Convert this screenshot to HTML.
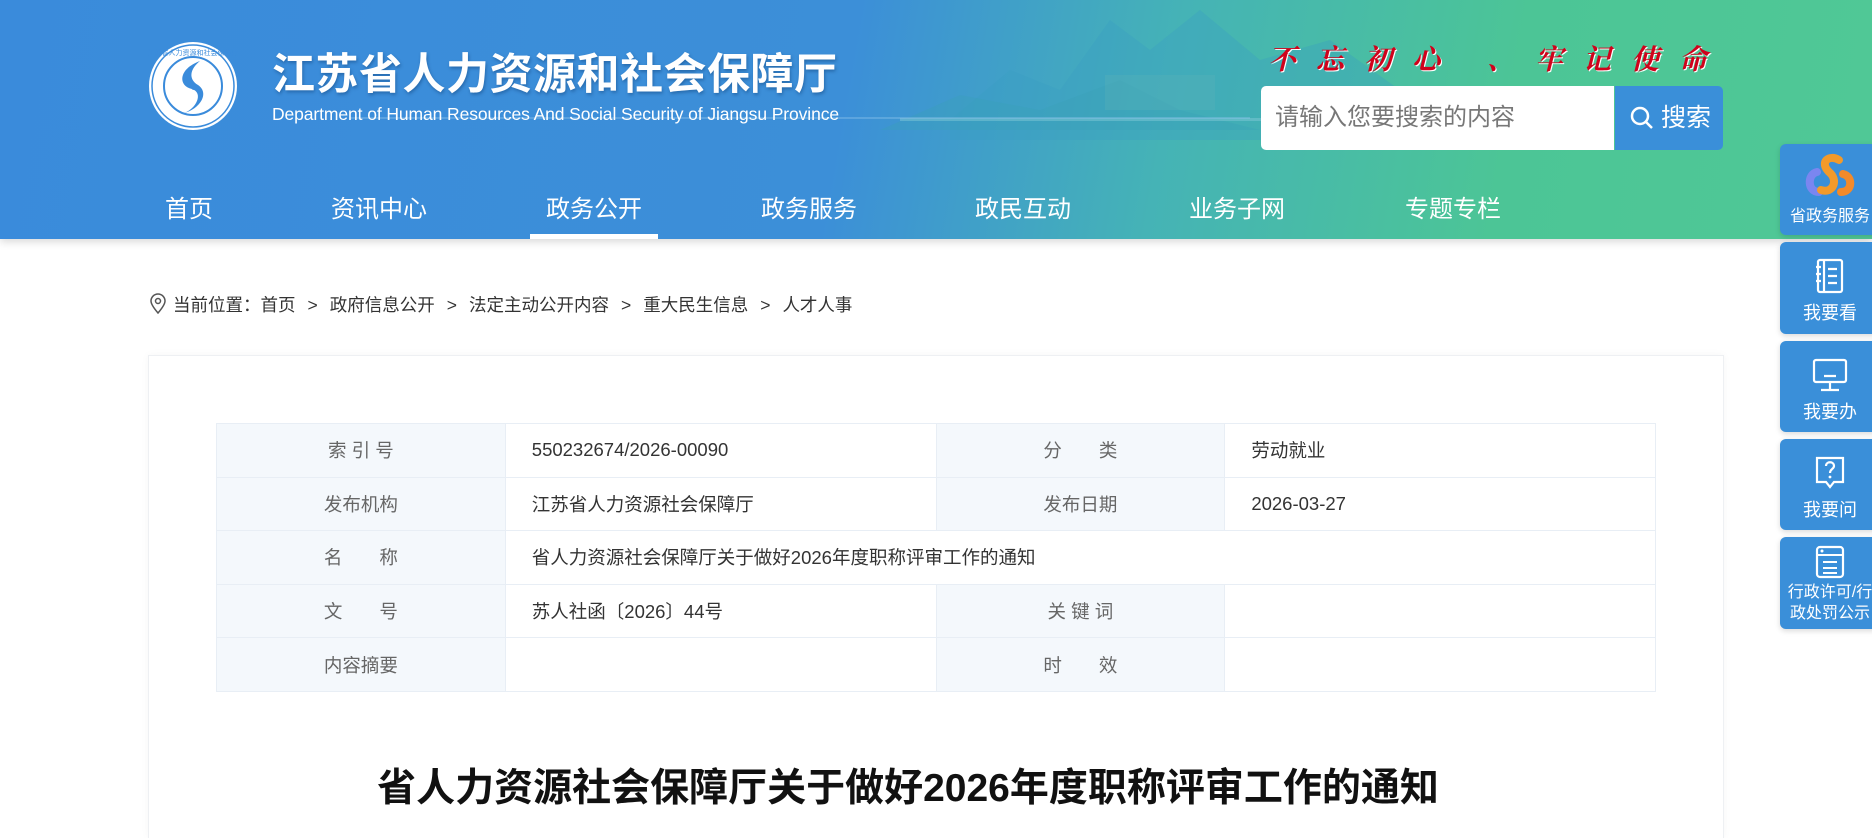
<!DOCTYPE html>
<html><head><meta charset="utf-8">
<style>
*{margin:0;padding:0;box-sizing:border-box}
html{width:1872px;height:838px;overflow:hidden}
body{width:1872px;height:838px;overflow:hidden;background:#fff;font-family:"Liberation Sans","Noto Sans CJK SC",sans-serif;position:relative}
.hd{position:absolute;left:0;top:0;width:1872px;height:239px;background:linear-gradient(100deg,#3a8bdb 0%,#3c8fd8 45%,#45b3b6 62%,#4cc596 80%,#50c896 100%);box-shadow:0 3px 8px rgba(0,0,0,.15);overflow:hidden}
.title{position:absolute;left:272px;top:40px;color:#fff;font-size:43px;font-weight:bold;letter-spacing:0.5px;text-shadow:1px 2px 3px rgba(0,40,90,.35);white-space:nowrap}
.en{position:absolute;left:272px;top:104px;color:#fff;font-size:17.5px;white-space:nowrap;letter-spacing:-0.1px}
.slogan{position:absolute;left:1268px;top:38px;color:#d0021b;font-size:28px;font-weight:bold;font-style:italic;font-family:"Liberation Serif","Noto Serif CJK SC",serif;white-space:nowrap;letter-spacing:20px;text-shadow:1px 1px 0 #fff}
.search{position:absolute;left:1261px;top:86px;width:353px;height:64px;background:#fff;border-radius:5px 0 0 5px;color:#777;font-size:24px;line-height:64px;padding-left:14px}
.sbtn{position:absolute;left:1615px;top:86px;width:108px;height:64px;background:#3a8fd9;border-radius:0 5px 5px 0;color:#fff;font-size:25px;line-height:64px;padding-left:46px}
.nav{position:absolute;top:189px;color:#fff;font-size:24px;white-space:nowrap}
.act{position:absolute;left:530px;top:234px;width:128px;height:5px;background:#fff}
.side{position:absolute;left:1780px;width:100px;background:#3a8fd9;border-radius:6px;color:#fff;text-align:center;font-size:18px;box-shadow:0 2px 6px rgba(0,0,0,.15)}
.side svg{display:block;margin:0 auto}
.crumb{position:absolute;left:148px;top:292px;font-size:17.5px;color:#333;white-space:nowrap}
.crumb b{font-weight:normal;margin:0 12px}
.box{position:absolute;left:148px;top:355px;width:1576px;height:483px;border:1px solid #eef0f3;border-bottom:none;box-shadow:0 0 8px rgba(0,0,0,.04)}
table{position:absolute;left:216px;top:423px;width:1440px;border-collapse:collapse;font-size:18.5px}
td{height:53.6px;border:1px solid #e8eef5;color:#333;padding-left:26px}
td.l{background:#f4f8fc;color:#666;text-align:center;padding:0;width:289px}
td.v{width:431px}
h1{position:absolute;left:0;width:1816px;top:757px;text-align:center;font-size:39px;font-weight:bold;color:#111;white-space:nowrap}
</style></head><body>
<div class="hd">
<svg width="1872" height="239" style="position:absolute;left:0;top:0">
<path d="M950 120 L1010 70 L1060 90 L1110 20 L1150 50 L1200 10 L1260 60 L1330 40 L1400 90 L1400 140 L950 140Z" fill="#3a9ec4" opacity=".35"/>
<path d="M880 130 L960 95 L1040 110 L1120 80 L1180 110 L1260 130 Z" fill="#3aa0b8" opacity=".35"/>
<rect x="1105" y="75" width="110" height="35" fill="#5ab3b8" opacity=".35"/>
<rect x="900" y="118" width="500" height="3" fill="#7fc7d5" opacity=".5"/>
<rect x="350" y="117" width="900" height="2" fill="#8cc3ea" opacity=".4"/>
</svg>
<svg width="90" height="90" style="position:absolute;left:148px;top:41px" viewBox="0 0 90 90">
<circle cx="45" cy="45" r="44" fill="#fff"/>
<circle cx="45" cy="45" r="41" fill="none" stroke="#3a8bdb" stroke-width="1.5"/>
<circle cx="45" cy="45" r="29" fill="#fff" stroke="#3a8bdb" stroke-width="2"/>
<path d="M52 20 C30 28 30 45 44 48 C56 52 48 68 36 72 C52 68 62 52 50 44 C40 38 42 28 52 20Z" fill="#3a8bdb"/>
<circle cx="46" cy="46" r="3" fill="#3a8bdb"/>
<text x="45" y="14" font-size="7" fill="#3a8bdb" text-anchor="middle">江苏省人力资源和社会保障厅</text>
</svg>
<div class="title">江苏省人力资源和社会保障厅</div>
<div class="en">Department of Human Resources And Social Security of Jiangsu Province</div>
<div class="slogan">不忘初心 、牢记使命</div>
<div class="search">请输入您要搜索的内容</div>
<div class="sbtn"><svg width="26" height="26" viewBox="0 0 26 26" style="position:absolute;left:14px;top:19px"><circle cx="11" cy="11" r="8" fill="none" stroke="#fff" stroke-width="2.5"/><path d="M17 17 L23 23" stroke="#fff" stroke-width="2.5"/></svg>搜索</div>
<div class="nav" style="left:165px">首页</div>
<div class="nav" style="left:331px">资讯中心</div>
<div class="nav" style="left:546px">政务公开</div>
<div class="nav" style="left:761px">政务服务</div>
<div class="nav" style="left:975px">政民互动</div>
<div class="nav" style="left:1189px">业务子网</div>
<div class="nav" style="left:1405px">专题专栏</div>
<div class="act"></div>
</div>
<div class="side" style="top:144px;height:91px;padding-top:6px;font-size:16px"><svg width="62" height="52" viewBox="0 0 62 52"><path d="M18 22 C8 24 8 42 20 42" stroke="#7a86f0" stroke-width="8" fill="none" stroke-linecap="round"/><path d="M40 10 C30 4 20 12 30 22 C40 30 34 44 22 40" stroke="#f39a2a" stroke-width="8" fill="none" stroke-linecap="round"/><path d="M44 24 C54 26 54 42 42 42" stroke="#f38a2a" stroke-width="8" fill="none" stroke-linecap="round"/></svg>省政务服务</div>
<div class="side" style="top:242px;height:92px;padding-top:16px"><svg width="32" height="36" viewBox="0 0 32 36"><rect x="4" y="2" width="24" height="32" rx="2" fill="none" stroke="#fff" stroke-width="2.2"/><path d="M10 2 V34 M14 11 H23 M14 18 H23 M14 25 H23 M2 9 H7 M2 16 H7 M2 23 H7" stroke="#fff" stroke-width="2.2"/></svg><div style="margin-top:5px">我要看</div></div>
<div class="side" style="top:341px;height:91px;padding-top:16px"><svg width="36" height="36" viewBox="0 0 36 36"><rect x="2" y="3" width="32" height="22" rx="2" fill="none" stroke="#fff" stroke-width="2.2"/><path d="M12 19 H24 M18 25 V32 M9 33 H27" stroke="#fff" stroke-width="2.2"/></svg><div style="margin-top:5px">我要办</div></div>
<div class="side" style="top:439px;height:91px;padding-top:16px"><svg width="32" height="36" viewBox="0 0 32 36"><path d="M3 3 H29 V27 H20 L16 32 L12 27 H3Z" fill="none" stroke="#fff" stroke-width="2.2"/><path d="M12 11 C12 6 20 6 20 11 C20 14 16 14 16 18" fill="none" stroke="#fff" stroke-width="2.2"/><circle cx="16" cy="22" r="1.4" fill="#fff"/></svg><div style="margin-top:5px">我要问</div></div>
<div class="side" style="top:537px;height:92px;padding-top:8px;line-height:21px;font-size:16px"><svg width="30" height="34" viewBox="0 0 30 34"><rect x="2" y="2" width="26" height="30" rx="3" fill="none" stroke="#fff" stroke-width="2.2"/><path d="M2 10 H28 M8 17 H22 M8 23 H22 M8 28 H22" stroke="#fff" stroke-width="2"/><circle cx="7" cy="6" r="1.5" fill="#fff"/></svg><div style="margin-top:3px">行政许可/行<br>政处罚公示</div></div>
<div class="crumb"><svg width="20" height="22" viewBox="0 0 20 22" style="vertical-align:-4px;margin-right:5px"><path d="M10 20 C4 13 3 10 3 8 A7 7 0 0 1 17 8 C17 10 16 13 10 20Z" fill="none" stroke="#555" stroke-width="1.5"/><circle cx="10" cy="8" r="2.5" fill="none" stroke="#555" stroke-width="1.5"/></svg>当前位置：首页<b>&gt;</b>政府信息公开<b>&gt;</b>法定主动公开内容<b>&gt;</b>重大民生信息<b>&gt;</b>人才人事</div>
<div class="box"></div>
<table>
<tr><td class="l">索 引 号</td><td class="v">550232674/2026-00090</td><td class="l">分　　类</td><td class="v">劳动就业</td></tr>
<tr><td class="l">发布机构</td><td class="v">江苏省人力资源社会保障厅</td><td class="l">发布日期</td><td class="v">2026-03-27</td></tr>
<tr><td class="l">名　　称</td><td colspan="3">省人力资源社会保障厅关于做好2026年度职称评审工作的通知</td></tr>
<tr><td class="l">文　　号</td><td class="v">苏人社函〔2026〕44号</td><td class="l">关 键 词</td><td class="v"></td></tr>
<tr><td class="l">内容摘要</td><td class="v"></td><td class="l">时　　效</td><td class="v"></td></tr>
</table>
<h1>省人力资源社会保障厅关于做好2026年度职称评审工作的通知</h1>
</body></html>
